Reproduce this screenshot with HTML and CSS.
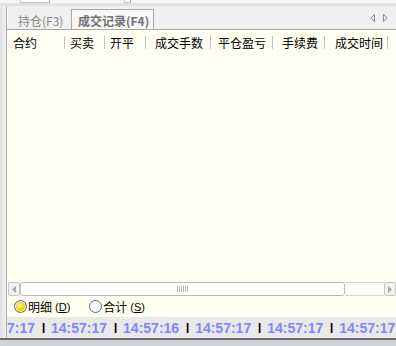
FILE: index.html
```html
<!DOCTYPE html>
<html lang="zh-CN">
<head>
  <meta charset="UTF-8">
  <title>成交记录</title>
  <link rel="stylesheet" href="styles.css">
</head>
<body>
  <div class="window">
    <div class="topband">
      <span class="stub stub--wide"></span>
      <span class="stub stub--narrow"></span>
    </div>

    <div class="frame">
      <div class="frame-edge"></div>

      <div class="panel">
        <div class="tabs">
          <div class="tab">持仓(F3)</div>
          <div class="tab is-active">成交记录(F4)</div>
          <div class="tabs__arrows">
            <svg width="5" height="8" viewBox="0 0 5 8"><path d="M4.5 0.5 L0.8 4 L4.5 7.5 Z" fill="none" stroke="#8c8c8c" stroke-width="1"/></svg>
            <svg width="5" height="8" viewBox="0 0 5 8"><path d="M0.5 0.5 L4.2 4 L0.5 7.5 Z" fill="none" stroke="#8c8c8c" stroke-width="1"/></svg>
          </div>
        </div>

        <div class="head">
          <div class="head__cell head__cell--c1">合约</div>
          <div class="head__cell head__cell--c2">买卖</div>
          <div class="head__cell head__cell--c3">开平</div>
          <div class="head__cell head__cell--c4">成交手数</div>
          <div class="head__cell head__cell--c5">平仓盈亏</div>
          <div class="head__cell head__cell--c6">手续费</div>
          <div class="head__cell head__cell--c7">成交时间</div>
        </div>

        <div class="rows"></div>

        <div class="hscroll">
          <div class="hscroll__btn">
            <svg width="4" height="7" viewBox="0 0 4 7"><path d="M4 0 L0 3.5 L4 7 Z" fill="#a4a4a4"/></svg>
          </div>
          <div class="hscroll__thumb">
            <span class="grip"></span><span class="grip"></span><span class="grip"></span><span class="grip"></span><span class="grip"></span><span class="grip"></span>
          </div>
          <div class="hscroll__track"></div>
          <div class="hscroll__btn">
            <svg width="4" height="7" viewBox="0 0 4 7"><path d="M0 0 L4 3.5 L0 7 Z" fill="#a4a4a4"/></svg>
          </div>
        </div>

        <div class="modes">
          <label class="mode">
            <span class="radio is-checked"></span>
            <span>明细</span>
            <span class="mode__key">(<u>D</u>)</span>
          </label>
          <label class="mode">
            <span class="radio"></span>
            <span>合计</span>
            <span class="mode__key">(<u>S</u>)</span>
          </label>
        </div>

        <div class="ticker">
          <span>7:17</span><i class="ticker__sep"></i>
          <span>14:57:17</span><i class="ticker__sep"></i>
          <span>14:57:16</span><i class="ticker__sep"></i>
          <span>14:57:17</span><i class="ticker__sep"></i>
          <span>14:57:17</span><i class="ticker__sep"></i>
          <span>14:57:17</span>
        </div>
      </div>
    </div>

    <div class="bottom"></div>
  </div>
</body>
</html>
```

FILE: styles.css
```css
:root {
  --cream: #fffff2;
  --chrome: #f0f0f0;
  --line: #a8a8a8;
  --cjk: 'Noto Sans CJK SC', 'Liberation Sans', sans-serif;
}

* {
  box-sizing: border-box;
}

html, body {
  margin: 0;
  padding: 0;
  width: 100%;
  height: 100%;
  overflow: hidden;
  background: var(--chrome);
  font-family: var(--cjk);
  font-size: 12px;
}

.window {
  display: flex;
  flex-direction: column;
  height: 346px;
}

.topband {
  display: flex;
  height: 6px;
  flex: none;
  background: #f6f6f6;
  border-bottom: 3px solid #e1e1e1;
}

.stub {
  height: 3px;
  background: #fff;
  border-right: 1px solid #b4b4b4;
  border-bottom: 1px solid #c8c8c8;
}

.stub--wide {
  width: 30px;
  margin-left: 20px;
  border-left: 1px solid #c8c8c8;
}

.stub--narrow {
  width: 7px;
  margin-left: 74px;
  border-left: 1px solid #c8c8c8;
}

.frame {
  display: flex;
  flex: 1;
  min-height: 0;
}

.frame-edge {
  width: 7px;
  flex: none;
  background: #ececec;
  border-left: 2px solid #e2e2e2;
  border-right: 1px solid #b4b4b4;
}

.panel {
  display: flex;
  flex-direction: column;
  flex: 1;
  min-width: 0;
}

/* tabs */

.tabs {
  display: flex;
  align-items: flex-end;
  height: 24px;
  flex: none;
  background: var(--chrome);
  border-bottom: 1px solid var(--line);
}

.tab {
  width: 64px;
  height: 21px;
  padding: 4px 0 0 11px;
  line-height: 17px;
  color: #8a8a8a;
  white-space: nowrap;
}

.tab.is-active {
  width: 83px;
  height: 20px;
  padding: 2px 0 0 6px;
  background: #f7f7f7;
  border: 1px solid var(--line);
  border-bottom: 0;
  color: #727272;
  font-weight: bold;
}

.tabs__arrows {
  display: flex;
  gap: 8px;
  align-self: center;
  margin: 0 8px 0 auto;
}

.tabs__arrows svg {
  display: block;
}

/* table */

.head {
  display: flex;
  align-items: center;
  height: 25px;
  flex: none;
  background: var(--cream);
  color: #000;
}

.head__cell {
  height: 13px;
  line-height: 13px;
  border-right: 1px solid #c4c4c4;
  white-space: nowrap;
  flex: none;
}

.head__cell--c1 { width: 58px; padding-left: 6px; }
.head__cell--c2 { width: 40px; padding-left: 5px; }
.head__cell--c3 { width: 41px; padding-left: 5px; }
.head__cell--c4 { width: 65px; padding-left: 9px; }
.head__cell--c5 { width: 62px; padding-left: 7px; }
.head__cell--c6 { width: 52px; padding-left: 9px; }
.head__cell--c7 { width: 63px; padding-left: 10px; }

.rows {
  flex: 1;
  background: var(--cream);
}

/* horizontal scrollbar */

.hscroll {
  display: flex;
  height: 14px;
  flex: none;
  padding-left: 1px;
  background: var(--cream);
}

.hscroll__btn {
  display: flex;
  align-items: center;
  justify-content: center;
  width: 12px;
  flex: none;
  background: #f2f2f2;
  border: 1px solid #c6c6c6;
  border-radius: 2px;
}

.hscroll__btn svg {
  display: block;
}

.hscroll__thumb {
  display: flex;
  align-items: center;
  justify-content: center;
  gap: 1px;
  width: 325px;
  flex: none;
  background: #fff;
  border: 1px solid #bcbcbc;
  border-radius: 3px;
}

.grip {
  width: 1px;
  height: 6px;
  background: #b8b8b8;
}

.hscroll__track {
  flex: 1;
  background: #fdfdfd;
  border-top: 1px solid #d4d4d4;
  border-bottom: 1px solid #d4d4d4;
}

/* mode radios */

.modes {
  display: flex;
  align-items: center;
  gap: 19px;
  height: 21px;
  flex: none;
  padding-left: 7px;
  background: var(--cream);
  color: #000;
}

.mode {
  display: flex;
  align-items: center;
  gap: 1px;
  line-height: 14px;
}

.mode__key {
  margin-left: 2px;
  font-family: 'Liberation Sans', sans-serif;
  font-size: 11px;
}

.radio {
  width: 13px;
  height: 13px;
  border-radius: 50%;
  border: 1px solid #4e6d8f;
  background: radial-gradient(circle at 45% 40%, #ffffff 0%, #f4f4f4 55%, #d6dde6 100%);
  box-shadow: inset 0 0 0 1px #fff;
}

.radio.is-checked {
  background: radial-gradient(circle at 45% 40%, #fff7a0 0%, #f7d400 45%, #d8a800 100%);
  box-shadow: inset 0 0 0 1px #f4f4f4;
}

/* time ticker */

.ticker {
  display: flex;
  align-items: center;
  gap: 7px;
  height: 21px;
  flex: none;
  overflow: hidden;
  background: #e9e9e9;
  color: #8484ff;
  font-family: 'Liberation Sans', sans-serif;
  font-size: 14px;
  font-weight: bold;
  white-space: nowrap;
}

.ticker span {
  flex: none;
}

.ticker__sep {
  width: 1px;
  height: 10px;
  flex: none;
  margin: 1px 0.5px 0;
  background: #000;
  box-shadow: -1px 0 0 #e89a48, 1px 0 0 #5470d8;
}

.bottom {
  height: 8px;
  flex: none;
  background: #ccd4dc;
  border-top: 2px solid #6c6c6c;
}
```
